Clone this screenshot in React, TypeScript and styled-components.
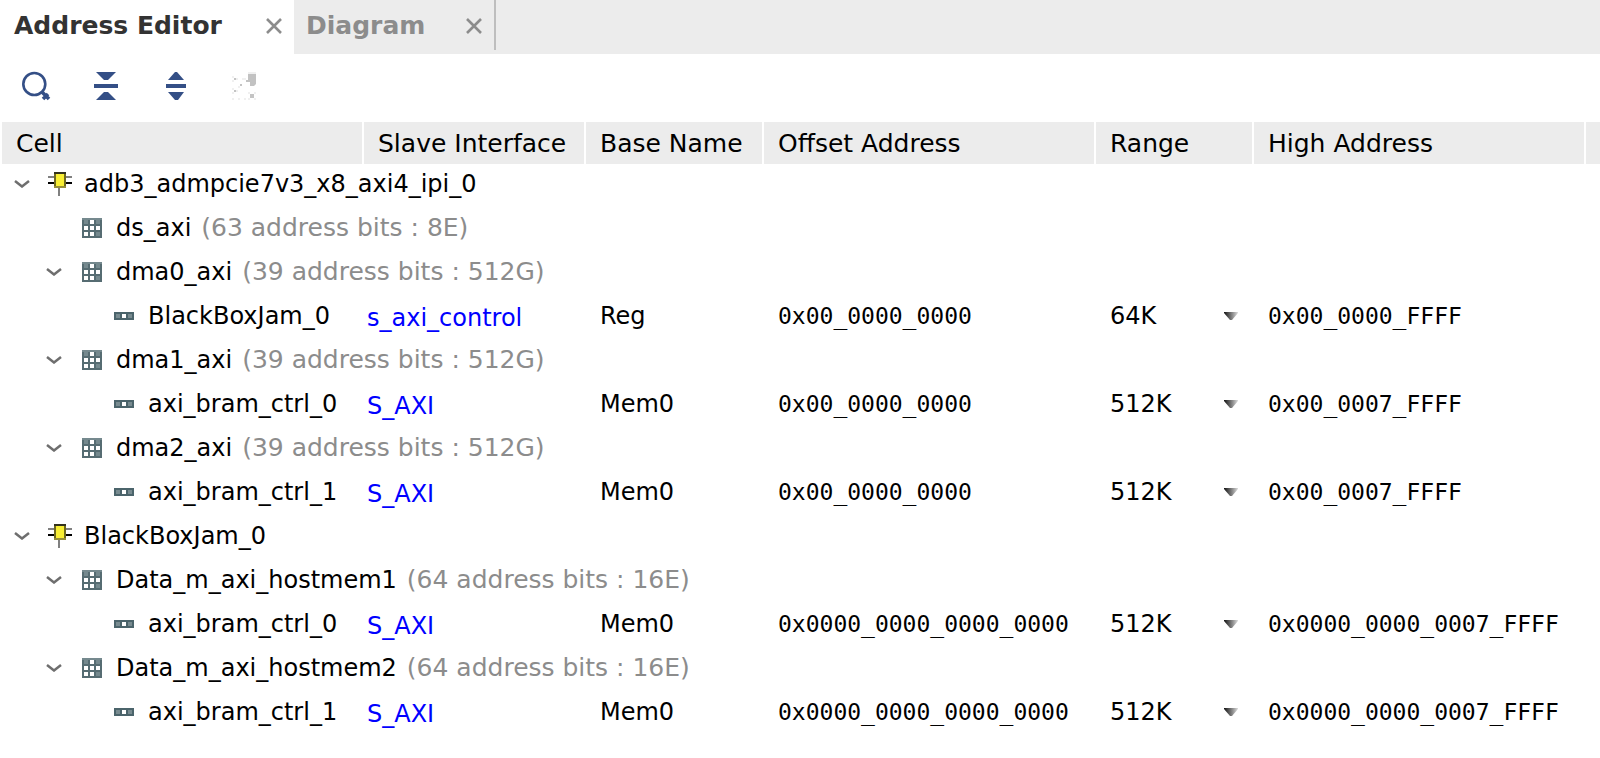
import React from 'react';
import styled, { createGlobalStyle } from 'styled-components';

const Global = createGlobalStyle`
  *, *::before, *::after { box-sizing: border-box; }
  body { margin: 0; background: #fff; color: #000; font: 24px/40px "DejaVu Sans", sans-serif; }
  button, select { font: inherit; color: inherit; background: none; border: 0; padding: 0; margin: 0; }
`;

const Tabs = styled.nav`
  display: flex;
  height: 54px;
  background: #ececec;
`;

const Tab = styled.div<{ $active?: boolean; $width: number }>`
  display: flex;
  justify-content: space-between;
  flex: none;
  width: ${(p) => p.$width}px;
  height: ${(p) => (p.$active ? 54 : 50)}px;
  padding: 0 12px 0 ${(p) => (p.$active ? 14 : 12)}px;
  background: ${(p) => (p.$active ? '#fff' : 'transparent')};
  border-right: ${(p) => (p.$active ? 'none' : '2px solid #bebebe')};
`;

const TabLabel = styled.button<{ $active?: boolean }>`
  height: 52px;
  font-size: 25px;
  font-weight: bold;
  color: ${(p) => (p.$active ? '#333' : '#8c8c8c')};
`;

const IconButton = styled.button`
  display: flex;
  align-items: center;
  height: 52px;
`;

const Toolbar = styled.div`
  display: flex;
  gap: 38px;
  height: 64px;
  padding: 6px 20px 0;
  margin-bottom: 4px;
`;

const ToolButton = styled.button`
  display: flex;
  align-items: center;
  justify-content: center;
  width: 32px;
  height: 52px;
`;

const Grid = styled.table`
  width: 100%;
  table-layout: fixed;
  border-collapse: collapse;
`;

const Head = styled.th`
  height: 42px;
  padding: 2px 0 0 14px;
  font-size: 25px;
  line-height: 40px;
  font-weight: normal;
  text-align: left;
  white-space: nowrap;
  background: #ececec;
  border-left: 2px solid #fff;
`;

const Cell = styled.td<{ $mono?: boolean }>`
  height: 44px;
  padding: 0 0 4px 15px;
  vertical-align: top;
  white-space: nowrap;
  font-family: ${(p) => (p.$mono ? '"DejaVu Sans Mono", monospace' : 'inherit')};
  font-size: ${(p) => (p.$mono ? 23 : 24)}px;
`;

const TreeCell = styled(Cell)<{ $level: number }>`
  padding-left: ${(p) => 11 + p.$level * 32}px;
`;

const TreeItem = styled.div`
  display: flex;
  align-items: center;
  height: 40px;
`;

const Toggle = styled.button`
  display: flex;
  width: 20px;
  height: 40px;
  align-items: center;
`;

const NodeIcon = styled.span`
  display: flex;
  width: 24px;
  margin: 0 12px 0 16px;
  justify-content: center;
`;

const Bits = styled.span`
  margin-left: 2px;
  font-size: 25px;
  color: #8c8c8c;
`;

const LinkCell = styled(Cell)`
  padding: 2px 0 2px 4px;
`;

const Link = styled.a`
  color: #00f;
  text-decoration: none;
`;

const RangeBox = styled.label`
  display: flex;
  align-items: center;
  justify-content: space-between;
  height: 40px;
  padding-right: 15px;
`;

const RangeSelect = styled.select`
  flex: 1;
  appearance: none;
  height: 40px;
`;

const Close = () => (
  <svg width="16" height="16" viewBox="0 0 16 16" aria-hidden="true">
    <path d="M1 1L15 15M15 1L1 15" stroke="#8c8c8c" strokeWidth="2.6" />
  </svg>
);

const Search = () => (
  <svg width="32" height="30" viewBox="0 0 32 30" aria-hidden="true">
    <circle cx="14.3" cy="13" r="11" fill="none" stroke="#344f86" strokeWidth="2.6" />
    <path d="M22 21L29 28M23 28L28 23" stroke="#344f86" strokeWidth="3.6" />
  </svg>
);

const Collapse = () => (
  <svg width="24" height="28" viewBox="0 0 24 28" aria-hidden="true">
    <path d="M2 0H22L14 8H10ZM0 12H24V16H0ZM10 20H14L22 28H2Z" fill="#344f86" />
  </svg>
);

const Expand = () => (
  <svg width="20" height="28" viewBox="0 0 20 28" aria-hidden="true">
    <path d="M9 0H11L18 8H2ZM0 12H20V16H0ZM2 20H18L12 28H9Z" fill="#344f86" />
  </svg>
);

const AutoAssign = () => (
  <svg width="30" height="28" viewBox="0 0 30 28" aria-hidden="true">
    <path d="M17 2H25V12L23 14H19V10H15V8H17Z" fill="#c2c2c2" />
    <path d="M17 0H25V2H17ZM11 6h4v2h-4zM1 4h2v2h-2zM1 8h2v2h-2zM5 6h2v2h-2zM1 16h2v2h-2zM1 20h2v2h-2zM5 18h2v2h-2zM7 14h2v2h-2zM1 26h2v2h-2zM7 26h2v2h-2zM13 26h2v2h-2zM17 20h2v2h-2zM23 20h2v2h-2zM17 26h2v2h-2zM23 26h2v2h-2z" fill="#f0f0f0" />
    <path d="M3 6h2v2h-2zM3 18h2v2h-2zM9 12h2v2h-2zM19 22h4v4h-4z" fill="#c4c4c4" />
  </svg>
);

const Chevron = () => (
  <svg width="20" height="8" viewBox="0 0 20 8" aria-hidden="true">
    <path d="M3 1L10 6.5L17 1" fill="none" stroke="#6e6e6e" strokeWidth="2.5" />
  </svg>
);

const Chip = () => (
  <svg width="24" height="24" viewBox="0 0 24 24" aria-hidden="true">
    <path d="M0 5H24M11 16V24" stroke="#808080" strokeWidth="2" />
    <path d="M0 11H24" stroke="#000" strokeWidth="2" />
    <path d="M6 0H18V16H6Z" fill="#6f691f" />
    <path d="M6 14H18V16H6Z" fill="#97903a" />
    <path d="M6 0H18V2H6Z" fill="#33321c" />
    <path d="M8 2H16V14H8Z" fill="#f9ef34" />
  </svg>
);

const GridIcon = () => (
  <svg width="20" height="20" viewBox="0 0 20 20" aria-hidden="true">
    <path d="M0 0H20V20H0Z" fill="#566c72" />
    <path d="M0 0H20V2H0ZM2 2H6V6H2ZM14 2H18V6H14ZM14 14H18V18H14Z" fill="#75898e" />
    <path d="M8 2h4v4h-4zM2 8h4v4h-4zM8 8h4v4h-4zM14 8h4v4h-4zM2 14h4v4h-4zM8 14h4v4h-4z" fill="#fff" />
  </svg>
);

const Segment = () => (
  <svg width="20" height="8" viewBox="0 0 20 8" aria-hidden="true">
    <path d="M0 0H20V8H0Z" fill="#4b646b" />
    <path d="M2 2H6V6H2ZM14 2H18V6H14Z" fill="#788b90" />
    <path d="M8 2H12V6H8Z" fill="#fff" />
  </svg>
);

const Arrow = () => (
  <svg width="14" height="8" viewBox="0 0 14 8" aria-hidden="true">
    <defs>
      <linearGradient id="arrow">
        <stop offset="0" stopColor="#111" />
        <stop offset="1" stopColor="#ddd" />
      </linearGradient>
    </defs>
    <path d="M0 0H14V1L8 8H6L0 1Z" fill="url(#arrow)" />
  </svg>
);

type Node = {
  level: number;
  name: string;
  bits?: string;
  leaf?: boolean;
  slave?: string;
  base?: string;
  offset?: string;
  range?: string;
  high?: string;
};

const shortBase = '0x00_0000_0000';
const longBase = '0x0000_0000_0000_0000';

const nodes: Node[] = [
  { level: 0, name: 'adb3_admpcie7v3_x8_axi4_ipi_0' },
  { level: 1, name: 'ds_axi', bits: '(63 address bits : 8E)', leaf: true },
  { level: 1, name: 'dma0_axi', bits: '(39 address bits : 512G)' },
  { level: 2, name: 'BlackBoxJam_0', slave: 's_axi_control', base: 'Reg', offset: shortBase, range: '64K', high: '0x00_0000_FFFF' },
  { level: 1, name: 'dma1_axi', bits: '(39 address bits : 512G)' },
  { level: 2, name: 'axi_bram_ctrl_0', slave: 'S_AXI', base: 'Mem0', offset: shortBase, range: '512K', high: '0x00_0007_FFFF' },
  { level: 1, name: 'dma2_axi', bits: '(39 address bits : 512G)' },
  { level: 2, name: 'axi_bram_ctrl_1', slave: 'S_AXI', base: 'Mem0', offset: shortBase, range: '512K', high: '0x00_0007_FFFF' },
  { level: 0, name: 'BlackBoxJam_0' },
  { level: 1, name: 'Data_m_axi_hostmem1', bits: '(64 address bits : 16E)' },
  { level: 2, name: 'axi_bram_ctrl_0', slave: 'S_AXI', base: 'Mem0', offset: longBase, range: '512K', high: '0x0000_0000_0007_FFFF' },
  { level: 1, name: 'Data_m_axi_hostmem2', bits: '(64 address bits : 16E)' },
  { level: 2, name: 'axi_bram_ctrl_1', slave: 'S_AXI', base: 'Mem0', offset: longBase, range: '512K', high: '0x0000_0000_0007_FFFF' },
];

const columns = [
  { title: 'Cell', width: 362 },
  { title: 'Slave Interface', width: 222 },
  { title: 'Base Name', width: 178 },
  { title: 'Offset Address', width: 332 },
  { title: 'Range', width: 158 },
  { title: 'High Address', width: 332 },
];

const icons = [Chip, GridIcon, Segment];

function TreeRow({ node }: { node: Node }) {
  const Icon = icons[node.level];
  const fixed = node.leaf || Boolean(node.slave);
  const label = (
    <TreeItem>
      {fixed ? <Toggle as="span" /> : <Toggle aria-label={`Collapse ${node.name}`}><Chevron /></Toggle>}
      <NodeIcon><Icon /></NodeIcon>
      <span>
        {node.name}
        {node.bits && <Bits> {node.bits}</Bits>}
      </span>
    </TreeItem>
  );
  if (!node.slave) {
    return (
      <tr>
        <TreeCell $level={node.level} colSpan={7}>{label}</TreeCell>
      </tr>
    );
  }
  return (
    <tr>
      <TreeCell $level={node.level}>{label}</TreeCell>
      <LinkCell><Link href="#interface">{node.slave}</Link></LinkCell>
      <Cell>{node.base}</Cell>
      <Cell $mono>{node.offset}</Cell>
      <Cell>
        <RangeBox>
          <RangeSelect aria-label={`Range of ${node.name}`} defaultValue={node.range}>
            <option>{node.range}</option>
          </RangeSelect>
          <Arrow />
        </RangeBox>
      </Cell>
      <Cell $mono>{node.high}</Cell>
      <Cell />
    </tr>
  );
}

export default function App() {
  return (
    <>
      <Global />
      <Tabs>
        <Tab $active $width={294}>
          <TabLabel $active>Address Editor</TabLabel>
          <IconButton aria-label="Close Address Editor"><Close /></IconButton>
        </Tab>
        <Tab $width={202}>
          <TabLabel>Diagram</TabLabel>
          <IconButton aria-label="Close Diagram"><Close /></IconButton>
        </Tab>
      </Tabs>
      <Toolbar>
        <ToolButton aria-label="Search"><Search /></ToolButton>
        <ToolButton aria-label="Collapse all"><Collapse /></ToolButton>
        <ToolButton aria-label="Expand all"><Expand /></ToolButton>
        <ToolButton aria-label="Auto assign address" disabled><AutoAssign /></ToolButton>
      </Toolbar>
      <Grid>
        <colgroup>
          {columns.map((c) => <col key={c.title} width={c.width} />)}
          <col />
        </colgroup>
        <thead>
          <tr>
            {columns.map((c) => <Head key={c.title} scope="col">{c.title}</Head>)}
            <Head as="td" />
          </tr>
        </thead>
        <tbody>
          {nodes.map((node, i) => <TreeRow key={i} node={node} />)}
        </tbody>
      </Grid>
    </>
  );
}
